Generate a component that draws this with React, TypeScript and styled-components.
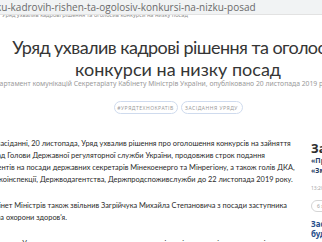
import * as React from "react";
import styled, { createGlobalStyle } from "styled-components";

const GlobalStyle = createGlobalStyle`
  html, body {
    margin: 0;
    padding: 0;
    background: #ffffff;
    overflow: hidden;
  }
  body {
    font-family: "Noto Sans", "Open Sans", sans-serif;
    color: #333333;
  }
`

const Frame = styled.div`
  width: 322px;
  height: 242px;
  overflow: hidden;
`

const AddressBar = styled.div`
  height: 14px;
  background-color: #f1f3f4;
  border-bottom: 1px solid #e2e2e2;
  display: flex;
  align-items: center;
  overflow: hidden;
`

const Url = styled.div`
  font-family: "Open Sans", sans-serif;
  font-size: 10px;
  color: #6a6a6a;
  white-space: nowrap;
  margin-left: -4px;
`

const Strip = styled.div`
  height: 4px;
  overflow: hidden;
`

const StripText = styled.div`
  font-size: 5.6px;
  line-height: 6px;
  margin-top: -3px;
  margin-left: 2px;
  color: #8f8f8f;
  white-space: nowrap;
`

const Page = styled.div`
  margin-left: -150px;
  width: 720px;
`

const Header = styled.div`
  width: 656px;
  padding-top: 17px;
  text-align: center;
  white-space: nowrap;
`

const Title = styled.h1`
  margin: 0;
  font-family: Lato, "Noto Sans", sans-serif;
  font-size: 18px;
  line-height: 22px;
  font-weight: 400;
  color: #353535;
`

const TitleLine = styled.span<{ $tight?: boolean }>`
  display: block;
  letter-spacing: ${(p) => (p.$tight ? "-0.55px" : "0")};
`

const Meta = styled.div`
  font-size: 6.8px;
  line-height: 8px;
  color: #9a9a9a;
  margin-left: -10px;
`

const Tags = styled.div`
  display: flex;
  justify-content: center;
  gap: 3px;
  margin-top: 13px;
`

const Tag = styled.span<{ $w: number }>`
  box-sizing: border-box;
  width: ${(p) => p.$w}px;
  height: 13px;
  border: 1px solid #cfdbee;
  border-radius: 7px;
  display: flex;
  align-items: center;
  justify-content: center;
  font-size: 5px;
  letter-spacing: 0.5px;
  text-transform: uppercase;
  color: #9a9a9a;
`

const Columns = styled.div`
  display: flex;
  gap: 12px;
  padding-left: 126px;
  margin-top: 24px;
`

const Article = styled.div`
  width: 323px;
  flex-shrink: 0;
  overflow: hidden;
`

const Para = styled.p`
  margin: 0 0 14px;
  font-family: Lato, "Noto Sans", sans-serif;
  font-size: 7.4px;
  line-height: 12px;
  color: #2a2a2a;
  white-space: nowrap;
  text-indent: 10px;
`

const Sidebar = styled.div`
  width: 200px;
  flex-shrink: 0;
  white-space: nowrap;
`

const SideHeading = styled.div`
  font-size: 13px;
  line-height: 16px;
  font-weight: 700;
  color: #2f2f2f;
  margin-top: 2px;
`

const Quote = styled.div`
  font-size: 7px;
  line-height: 10px;
  font-weight: 700;
  color: #233c66;
`

const Time = styled.div`
  font-size: 5px;
  line-height: 6px;
  color: #a8a8a8;
  margin-top: 9px;
`

const Pill = styled.span`
  display: inline-flex;
  align-items: center;
  height: 10px;
  padding: 0 5px;
  margin-top: 2px;
  border: 1px solid #d5d5d5;
  border-radius: 6px;
  font-size: 5px;
  color: #9a9a9a;
`

const NewsLink = styled.div`
  font-size: 8px;
  line-height: 10px;
  font-weight: 700;
  color: #2a4f8c;
  margin-top: 6px;
`

export default function App() {
  return (
    <>
      <GlobalStyle />
      <Frame>
        <AddressBar>
          <Url>ku-kadrovih-rishen-ta-ogolosiv-konkursi-na-nizku-posad</Url>
        </AddressBar>
        <Strip>
          <StripText>Уряд ухвалив кадрові рішення та оголосив конкурси на низку посад</StripText>
        </Strip>
        <Page>
          <Header>
            <Title>
              <TitleLine $tight>Уряд ухвалив кадрові рішення та оголосив</TitleLine>
              <TitleLine>конкурси на низку посад</TitleLine>
            </Title>
            <Meta>
              Департамент комунікацій Секретаріату Кабінету Міністрів України, опубліковано 20 листопада 2019 року о 16:45
            </Meta>
            <Tags>
              <Tag $w={64}>#урядтехнократів</Tag>
              <Tag $w={62}>Засідання уряду</Tag>
            </Tags>
          </Header>
          <Columns>
            <Article>
              <Para>
                На засіданні, 20 листопада, Уряд ухвалив рішення про оголошення конкурсів на зайняття
                <br />
                та посад Голови Державної регуляторної служби України, продовжив строк подання
                <br />
                документів на посади державних секретарів Мінекоенерго та Мінрегіону, а також голів ДКА,
                <br />
                Держекоінспекції, Держводагентства, Держпродспоживслужби до 22 листопада 2019 року.
              </Para>
              <Para>
                Кабінет Міністрів також звільнив Загрійчука Михайла Степановича з посади заступника
                <br />
                міністра охорони здоров'я.
              </Para>
              <Para>
                Крім того, Уряд погодив кандидатури на посади керівників територіальних органів.
              </Para>
            </Article>
            <Sidebar>
              <SideHeading>Засідання Уряду</SideHeading>
              <Quote>«Про затвердження порядку»</Quote>
              <Quote>«Зміни до постанови»</Quote>
              <Time>13:20</Time>
              <Pill>6 хв</Pill>
              <NewsLink>
                Засідання Уряду
                <br />
                буде транслюватися
                <br />
                в прямому ефірі
              </NewsLink>
            </Sidebar>
          </Columns>
        </Page>
      </Frame>
    </>
  );
}
